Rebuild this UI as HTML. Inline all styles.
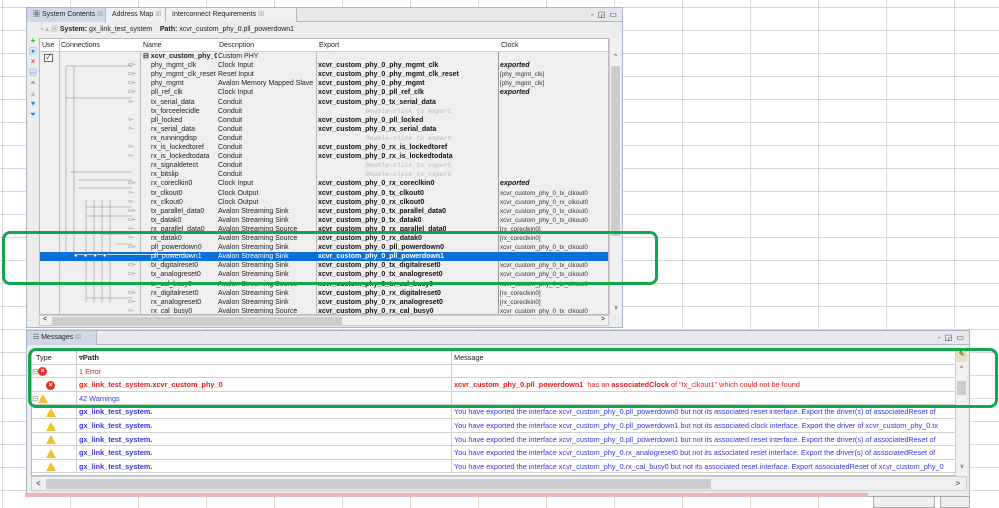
<!DOCTYPE html>
<html><head><meta charset="utf-8"><style>
*{margin:0;padding:0;box-sizing:border-box}
body{width:999px;height:508px;overflow:hidden;background:#fff;font-family:"Liberation Sans","Noto Sans CJK JP",sans-serif;font-size:7px;color:#222;position:relative}
.grid{position:absolute;inset:0;background-image:linear-gradient(to right,#d8d8d8 1px,transparent 1px),linear-gradient(to bottom,#d8d8d8 1px,transparent 1px);background-size:68px 23px;background-position:2px 7px}
.abs{position:absolute}
.panel{position:absolute;background:#ececec;border:1px solid #a8b4c8}
.tab{position:absolute;top:0;height:14px;line-height:13px;padding-left:6px;font-size:7px;border-right:1px solid #b8b8b8}
.row{position:absolute;left:0;height:9.1px;line-height:9.1px;white-space:nowrap;width:570px}
.row>span{position:absolute;top:0;overflow:hidden}
.c1{left:0;width:19px}.c3{left:101px;width:76px;padding-left:10px}.c4{left:177px;width:100px;padding-left:1px}.c5{left:277px;width:182px;padding-left:1px;font-weight:bold;color:#111}.c6{left:459px;width:111px;padding-left:1px;font-size:6.3px;color:#333}
.dbl{color:#c8c8c8!important;font-style:italic;text-align:center;font-family:"Liberation Mono",monospace;font-size:6.5px}
.exp{font-weight:bold;font-style:italic;color:#111!important;font-size:7px!important}
.sel{background:#0a6fd6;color:#fff}
.sel>span{color:#fff!important}
.conn{position:absolute;left:88px;font-size:6px;color:#555}
.mrow{position:absolute;left:0;height:13.6px;line-height:13.5px;width:932px;border-bottom:1px solid #d0d0d0;white-space:nowrap;background:#fff;font-size:7.3px}
.mrow>span{position:absolute;top:0;overflow:hidden;height:13px}
.p{left:44px;width:375px;padding-left:2px;border-left:1px solid #ccc}
.m{left:419px;width:513px;padding-left:2px;border-left:1px solid #ccc}
.blue{color:#3535e0}.red{color:#e21b1b}
.err{display:inline-block;width:9px;height:9px;border-radius:50%;background:#e03030;color:#fff;font-size:7px;line-height:9px;text-align:center;font-weight:bold;vertical-align:middle}
.warn{display:inline-block;width:0;height:0;border-left:5px solid transparent;border-right:5px solid transparent;border-bottom:9px solid #f0c030;vertical-align:middle}
</style></head><body>
<div class="grid"></div>

<div class="panel" style="left:26px;top:7px;width:597px;height:321px">
  <div class="abs" style="left:0;top:0;width:595px;height:14px;background:#e6e8ec;border-bottom:1px solid #b0b8c8"></div>
  <div class="tab" style="left:0;width:79px;background:#d0d8e8">▦ System Contents <span style="color:#999;font-size:6px">⊠</span></div>
  <div class="tab" style="left:79px;width:60px;background:#eef0f3">Address Map <span style="color:#999;font-size:6px">⊠</span></div>
  <div class="tab" style="left:139px;width:131px;background:#eef0f3">Interconnect Requirements <span style="color:#999;font-size:6px">⊠</span></div>
  <div class="abs" style="right:4px;top:2px;font-size:8px;color:#333;letter-spacing:1px">- ◲ ▭</div>
  <div class="abs" style="left:14px;top:16px;font-size:7px;white-space:nowrap"><span style="color:#aaa">▪ ▴ ▦</span> <b>System:</b> gx_link_test_system &nbsp;&nbsp; <b>Path:</b> xcvr_custom_phy_0.pll_powerdown1</div>
  <div class="abs" style="left:1px;top:28px;width:10px;font-size:8px;line-height:10.5px;text-align:center">
    <div style="color:#2a2;font-weight:bold">+</div><div style="color:#38c">▣</div><div style="color:#d22">×</div><div style="color:#37c">▤</div><div style="color:#999">⏶</div><div style="color:#bbb">▴</div><div style="color:#28d">▾</div><div style="color:#28d">⏷</div>
  </div>
  <div class="abs" style="left:12px;top:30px;width:570px;height:277px;background:#efefef;border:1px solid #bbb;overflow:hidden">
    <div class="abs" style="left:0;top:0;width:570px;height:13px;background:#fff;border-bottom:1px solid #ccc;line-height:13px">
      <span class="abs" style="left:2px">Use</span><span class="abs" style="left:21px">Connections</span><span class="abs" style="left:103px">Name</span><span class="abs" style="left:179px">Description</span><span class="abs" style="left:279px">Export</span><span class="abs" style="left:461px">Clock</span>
    </div>
    <div class="abs" style="left:19px;top:0;width:1px;height:277px;background:#bbb"></div>
    <div class="abs" style="left:100px;top:13px;width:1px;height:264px;background:#bbb"></div>
    <div class="abs" style="left:276px;top:13px;width:1px;height:264px;background:#bbb"></div>
    <div class="abs" style="left:458px;top:13px;width:1px;height:264px;background:#999"></div>
    <div class="abs" style="left:4px;top:15px;width:9px;height:8px;border:1px solid #666;background:#fff;font-size:7px;line-height:6px;text-align:center">✓</div>
    <svg class="abs" style="left:20px;top:13px" width="80" height="264" stroke="#aaa" fill="none" stroke-width="0.8">
      <path d="M6 14V200M14 14V200M6 14H72M6 46H72M10 120H72M18 128H72M18 136H72M26 148V250M34 148V250M42 148V250M50 148V250M26 155H72M26 164H72M26 246H72M40 182H72M56 192H72"/>
    </svg>
    <div class="abs" style="left:0;top:13px;width:570px">
<div class="row" style="top:0"><span class="c3" style="padding-left:2px;font-weight:bold">⊟ xcvr_custom_phy_0</span><span class="c4">Custom PHY</span></div>
<div class="row" style="top:9.1px"><span class="conn">▭-</span><span class="c3">phy_mgmt_clk</span><span class="c4">Clock Input</span><span class="c5">xcvr_custom_phy_0_phy_mgmt_clk</span><span class="c6 exp">exported</span></div>
<div class="row" style="top:18.2px"><span class="conn">▭-</span><span class="c3">phy_mgmt_clk_reset</span><span class="c4">Reset Input</span><span class="c5">xcvr_custom_phy_0_phy_mgmt_clk_reset</span><span class="c6">[phy_mgmt_clk]</span></div>
<div class="row" style="top:27.3px"><span class="conn">▭-</span><span class="c3">phy_mgmt</span><span class="c4">Avalon Memory Mapped Slave</span><span class="c5">xcvr_custom_phy_0_phy_mgmt</span><span class="c6">[phy_mgmt_clk]</span></div>
<div class="row" style="top:36.4px"><span class="conn">▭-</span><span class="c3">pll_ref_clk</span><span class="c4">Clock Input</span><span class="c5">xcvr_custom_phy_0_pll_ref_clk</span><span class="c6 exp">exported</span></div>
<div class="row" style="top:45.5px"><span class="conn">○-</span><span class="c3">tx_serial_data</span><span class="c4">Conduit</span><span class="c5">xcvr_custom_phy_0_tx_serial_data</span></div>
<div class="row" style="top:54.6px"><span class="c3">tx_forceelecidle</span><span class="c4">Conduit</span><span class="c5 dbl">Double-click to export</span></div>
<div class="row" style="top:63.7px"><span class="conn">○-</span><span class="c3">pll_locked</span><span class="c4">Conduit</span><span class="c5">xcvr_custom_phy_0_pll_locked</span></div>
<div class="row" style="top:72.8px"><span class="conn">○-</span><span class="c3">rx_serial_data</span><span class="c4">Conduit</span><span class="c5">xcvr_custom_phy_0_rx_serial_data</span></div>
<div class="row" style="top:81.9px"><span class="c3">rx_runningdisp</span><span class="c4">Conduit</span><span class="c5 dbl">Double-click to export</span></div>
<div class="row" style="top:91px"><span class="conn">○-</span><span class="c3">rx_is_lockedtoref</span><span class="c4">Conduit</span><span class="c5">xcvr_custom_phy_0_rx_is_lockedtoref</span></div>
<div class="row" style="top:100.1px"><span class="conn">○-</span><span class="c3">rx_is_lockedtodata</span><span class="c4">Conduit</span><span class="c5">xcvr_custom_phy_0_rx_is_lockedtodata</span></div>
<div class="row" style="top:109.2px"><span class="c3">rx_signaldetect</span><span class="c4">Conduit</span><span class="c5 dbl">Double-click to export</span></div>
<div class="row" style="top:118.3px"><span class="c3">rx_bitslip</span><span class="c4">Conduit</span><span class="c5 dbl">Double-click to export</span></div>
<div class="row" style="top:127.4px"><span class="conn">▭-</span><span class="c3">rx_coreclkin0</span><span class="c4">Clock Input</span><span class="c5">xcvr_custom_phy_0_rx_coreclkin0</span><span class="c6 exp">exported</span></div>
<div class="row" style="top:136.5px"><span class="conn">○-</span><span class="c3">tx_clkout0</span><span class="c4">Clock Output</span><span class="c5">xcvr_custom_phy_0_tx_clkout0</span><span class="c6">xcvr_custom_phy_0_tx_clkout0</span></div>
<div class="row" style="top:145.6px"><span class="conn">○-</span><span class="c3">rx_clkout0</span><span class="c4">Clock Output</span><span class="c5">xcvr_custom_phy_0_rx_clkout0</span><span class="c6">xcvr_custom_phy_0_rx_clkout0</span></div>
<div class="row" style="top:154.7px"><span class="conn">▭-</span><span class="c3">tx_parallel_data0</span><span class="c4">Avalon Streaming Sink</span><span class="c5">xcvr_custom_phy_0_tx_parallel_data0</span><span class="c6">xcvr_custom_phy_0_tx_clkout0</span></div>
<div class="row" style="top:163.8px"><span class="conn">▭-</span><span class="c3">tx_datak0</span><span class="c4">Avalon Streaming Sink</span><span class="c5">xcvr_custom_phy_0_tx_datak0</span><span class="c6">xcvr_custom_phy_0_tx_clkout0</span></div>
<div class="row" style="top:172.9px"><span class="conn">○-</span><span class="c3">rx_parallel_data0</span><span class="c4">Avalon Streaming Source</span><span class="c5">xcvr_custom_phy_0_rx_parallel_data0</span><span class="c6">[rx_coreclkin0]</span></div>
<div class="row" style="top:182px"><span class="conn">○-</span><span class="c3">rx_datak0</span><span class="c4">Avalon Streaming Source</span><span class="c5">xcvr_custom_phy_0_rx_datak0</span><span class="c6">[rx_coreclkin0]</span></div>
<div class="row" style="top:191.1px"><span class="conn">▭-</span><span class="c3">pll_powerdown0</span><span class="c4">Avalon Streaming Sink</span><span class="c5">xcvr_custom_phy_0_pll_powerdown0</span><span class="c6">xcvr_custom_phy_0_tx_clkout0</span></div>
<div class="row sel" style="top:200.2px;left:0;width:570px"><span class="conn" style="left:34px">●━●━●━●━━━━━━━━━━━━━▭-</span><span class="c3">pll_powerdown1</span><span class="c4">Avalon Streaming Sink</span><span class="c5">xcvr_custom_phy_0_pll_powerdown1</span></div>
<div class="row" style="top:209.3px"><span class="conn">▭-</span><span class="c3">tx_digitalreset0</span><span class="c4">Avalon Streaming Sink</span><span class="c5">xcvr_custom_phy_0_tx_digitalreset0</span><span class="c6">xcvr_custom_phy_0_tx_clkout0</span></div>
<div class="row" style="top:218.4px"><span class="conn">▭-</span><span class="c3">tx_analogreset0</span><span class="c4">Avalon Streaming Sink</span><span class="c5">xcvr_custom_phy_0_tx_analogreset0</span><span class="c6">xcvr_custom_phy_0_tx_clkout0</span></div>
<div class="row" style="top:227.5px"><span class="conn">○-</span><span class="c3">tx_cal_busy0</span><span class="c4">Avalon Streaming Source</span><span class="c5">xcvr_custom_phy_0_tx_cal_busy0</span><span class="c6">xcvr_custom_phy_0_tx_clkout0</span></div>
<div class="row" style="top:236.6px"><span class="conn">▭-</span><span class="c3">rx_digitalreset0</span><span class="c4">Avalon Streaming Sink</span><span class="c5">xcvr_custom_phy_0_rx_digitalreset0</span><span class="c6">[rx_coreclkin0]</span></div>
<div class="row" style="top:245.7px"><span class="conn">▭-</span><span class="c3">rx_analogreset0</span><span class="c4">Avalon Streaming Sink</span><span class="c5">xcvr_custom_phy_0_rx_analogreset0</span><span class="c6">[rx_coreclkin0]</span></div>
<div class="row" style="top:254.8px"><span class="conn">○-</span><span class="c3">rx_cal_busy0</span><span class="c4">Avalon Streaming Source</span><span class="c5">xcvr_custom_phy_0_rx_cal_busy0</span><span class="c6">xcvr_custom_phy_0_tx_clkout0</span></div>
<div class="row" style="top:263.9px"><span class="c3">reconfig_from_xcvr</span><span class="c4">Conduit</span><span class="c5 dbl">Double-click to export</span></div>
    </div>
  </div>
  <div class="abs" style="left:582px;top:30px;width:12px;height:277px;background:#f0f0f0;border-left:1px solid #ccc">
    <div style="font-size:6px;text-align:center;margin-top:16px">^</div>
    <div class="abs" style="left:1px;top:28px;width:9px;height:170px;background:#cdcdcd"></div>
    <div class="abs" style="left:0;bottom:4px;width:12px;font-size:6px;text-align:center">v</div>
  </div>
  <div class="abs" style="left:12px;top:307px;width:570px;height:11px;background:#f0f0f0;border:1px solid #ccc">
    <span class="abs" style="left:3px;top:0;font-size:7px">&lt;</span>
    <div class="abs" style="left:12px;top:1px;width:290px;height:8px;background:#cdcdcd"></div>
    <span class="abs" style="right:3px;top:0;font-size:7px">&gt;</span>
  </div>
</div>

<div class="panel" style="left:26px;top:330px;width:944px;height:167px;background:#ececec">
  <div class="abs" style="left:0;top:0;width:942px;height:14px;background:#e6e8ec;border-bottom:1px solid #b0b8c8"></div>
  <div class="tab" style="left:0;width:70px;background:#d0d8e8">☷ Messages <span style="color:#999;font-size:6px">⊠</span></div>
  <div class="abs" style="right:4px;top:2px;font-size:8px;color:#333;letter-spacing:1px">- ◲ ▭</div>
  <div class="abs" style="left:4px;top:19px;width:932px;height:126px;background:#fff;border:1px solid #bbb;overflow:hidden">
    <div class="mrow" style="top:0;background:#fff"><span style="left:4px">Type</span><span class="p" style="font-weight:bold;font-size:7.5px">▿Path</span><span class="m">Message</span></div>
    <div class="mrow" style="top:13.6px"><span style="left:0;color:#888">⊟<span class="err">×</span></span><span class="p red">1 Error</span><span class="m"></span></div>
    <div class="mrow" style="top:27.2px"><span style="left:14px"><span class="err">×</span></span><span class="p red" style="font-weight:bold">gx_link_test_system.xcvr_custom_phy_0</span><span class="m red"><b>xcvr_custom_phy_0.pll_powerdown1</b> &nbsp;has an <b>associatedClock</b> of "tx_clkout1" which could not be found</span></div>
    <div class="mrow" style="top:40.8px"><span style="left:0;color:#888">⊟<span class="warn"></span></span><span class="p blue">42 Warnings</span><span class="m"></span></div>
    <div class="mrow" style="top:54.4px"><span style="left:14px"><span class="warn"></span></span><span class="p blue" style="font-weight:bold">gx_link_test_system.</span><span class="m blue">You have exported the interface xcvr_custom_phy_0.pll_powerdown0 but not its associated reset interface. Export the driver(s) of associatedReset of</span></div>
    <div class="mrow" style="top:68px"><span style="left:14px"><span class="warn"></span></span><span class="p blue" style="font-weight:bold">gx_link_test_system.</span><span class="m blue">You have exported the interface xcvr_custom_phy_0.pll_powerdown1 but not its associated clock interface. Export the driver of xcvr_custom_phy_0.tx</span></div>
    <div class="mrow" style="top:81.6px"><span style="left:14px"><span class="warn"></span></span><span class="p blue" style="font-weight:bold">gx_link_test_system.</span><span class="m blue">You have exported the interface xcvr_custom_phy_0.pll_powerdown1 but not its associated reset interface. Export the driver(s) of associatedReset of</span></div>
    <div class="mrow" style="top:95.2px"><span style="left:14px"><span class="warn"></span></span><span class="p blue" style="font-weight:bold">gx_link_test_system.</span><span class="m blue">You have exported the interface xcvr_custom_phy_0.rx_analogreset0 but not its associated reset interface. Export the driver(s) of associatedReset of</span></div>
    <div class="mrow" style="top:108.8px"><span style="left:14px"><span class="warn"></span></span><span class="p blue" style="font-weight:bold">gx_link_test_system.</span><span class="m blue">You have exported the interface xcvr_custom_phy_0.rx_cal_busy0 but not its associated reset interface. Export associatedReset of xcvr_custom_phy_0</span></div>
  </div>
  <div class="abs" style="left:928px;top:19px;width:12px;height:126px;background:#f0f0f0;border-left:1px solid #ccc">
    <div style="height:12px;background:#e8e0c0;font-size:7px;text-align:center">✎</div>
    <div style="font-size:6px;text-align:center;margin-top:4px">^</div>
    <div class="abs" style="left:1px;top:31px;width:9px;height:14px;background:#cdcdcd"></div>
    <div class="abs" style="left:0;top:114px;width:12px;font-size:6px;text-align:center">v</div>
  </div>
  <div class="abs" style="left:4px;top:145px;width:936px;height:15px;background:#f0f0f0;border:1px solid #ccc">
    <span class="abs" style="left:4px;top:2px;font-size:8px">&lt;</span>
    <div class="abs" style="left:14px;top:2px;width:665px;height:10px;background:#cdcdcd"></div>
    <span class="abs" style="right:6px;top:2px;font-size:8px">&gt;</span>
  </div>
</div>
<div class="abs" style="left:25px;top:493px;width:843px;height:4px;background:#f0b4b4"></div>
<div class="abs" style="left:873px;top:496px;width:62px;height:12px;border:1px solid #aaa;background:#eee"></div>
<div class="abs" style="left:940px;top:496px;width:30px;height:12px;border:1px solid #aaa;background:#eee"></div>

<div class="abs" style="left:2px;top:231px;width:656px;height:54px;border:3px solid #10a84a;border-radius:8px"></div>
<div class="abs" style="left:28px;top:348px;width:970px;height:60px;border:3px solid #10a84a;border-radius:8px"></div>
</body></html>
